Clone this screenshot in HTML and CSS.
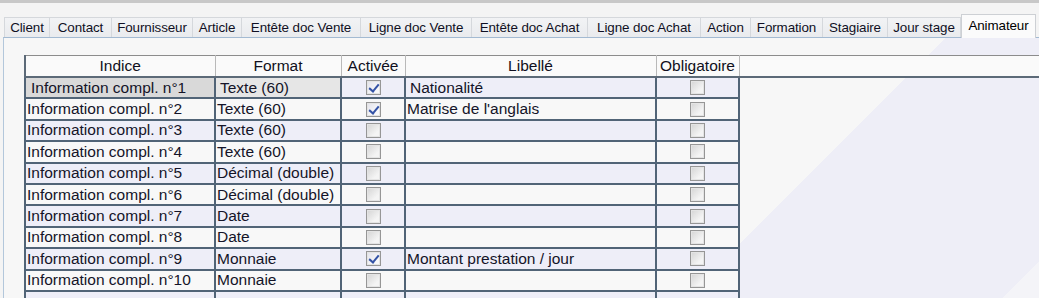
FILE: index.html
```html
<!DOCTYPE html>
<html lang="fr">
<head>
    <meta charset="UTF-8">
    <title>Paramètres - Animateur</title>
    <link rel="stylesheet" href="styles.css">
</head>
<body>
    <div class="topbar"></div>
    <div class="tabs">
        <div class="tab">Client</div>
        <div class="tab">Contact</div>
        <div class="tab">Fournisseur</div>
        <div class="tab">Article</div>
        <div class="tab">Entête doc Vente</div>
        <div class="tab">Ligne doc Vente</div>
        <div class="tab">Entête doc Achat</div>
        <div class="tab">Ligne doc Achat</div>
        <div class="tab">Action</div>
        <div class="tab">Formation</div>
        <div class="tab">Stagiaire</div>
        <div class="tab">Jour stage</div>
        <div class="tab sel">Animateur</div>
    </div>
    <div class="panel">
        <table class="grid">
            <col class="c1">
            <col class="c2">
            <col class="c3">
            <col class="c4">
            <col class="c5">
            <col>
            <tr class="head">
                <th>Indice</th>
                <th>Format</th>
                <th>Activée</th>
                <th>Libellé</th>
                <th>Obligatoire</th>
                <th class="fill"></th>
            </tr>
            <tr class="odd cur">
                <td class="ind">Information compl. n°1</td>
                <td class="fmt">Texte (60)</td>
                <td class="ck"><span class="box on"></span></td>
                <td class="lib">Nationalité</td>
                <td class="ck"><span class="box"></span></td>
                <td class="fill"></td>
            </tr>
            <tr>
                <td>Information compl. n°2</td>
                <td>Texte (60)</td>
                <td class="ck"><span class="box on"></span></td>
                <td>Matrise de l'anglais</td>
                <td class="ck"><span class="box"></span></td>
                <td class="fill"></td>
            </tr>
            <tr class="odd">
                <td>Information compl. n°3</td>
                <td>Texte (60)</td>
                <td class="ck"><span class="box"></span></td>
                <td></td>
                <td class="ck"><span class="box"></span></td>
                <td class="fill"></td>
            </tr>
            <tr>
                <td>Information compl. n°4</td>
                <td>Texte (60)</td>
                <td class="ck"><span class="box"></span></td>
                <td></td>
                <td class="ck"><span class="box"></span></td>
                <td class="fill"></td>
            </tr>
            <tr class="odd">
                <td>Information compl. n°5</td>
                <td>Décimal (double)</td>
                <td class="ck"><span class="box"></span></td>
                <td></td>
                <td class="ck"><span class="box"></span></td>
                <td class="fill"></td>
            </tr>
            <tr>
                <td>Information compl. n°6</td>
                <td>Décimal (double)</td>
                <td class="ck"><span class="box"></span></td>
                <td></td>
                <td class="ck"><span class="box"></span></td>
                <td class="fill"></td>
            </tr>
            <tr class="odd">
                <td>Information compl. n°7</td>
                <td>Date</td>
                <td class="ck"><span class="box"></span></td>
                <td></td>
                <td class="ck"><span class="box"></span></td>
                <td class="fill"></td>
            </tr>
            <tr>
                <td>Information compl. n°8</td>
                <td>Date</td>
                <td class="ck"><span class="box"></span></td>
                <td></td>
                <td class="ck"><span class="box"></span></td>
                <td class="fill"></td>
            </tr>
            <tr class="odd">
                <td>Information compl. n°9</td>
                <td>Monnaie</td>
                <td class="ck"><span class="box on"></span></td>
                <td>Montant prestation / jour</td>
                <td class="ck"><span class="box"></span></td>
                <td class="fill"></td>
            </tr>
            <tr>
                <td>Information compl. n°10</td>
                <td>Monnaie</td>
                <td class="ck"><span class="box"></span></td>
                <td></td>
                <td class="ck"><span class="box"></span></td>
                <td class="fill"></td>
            </tr>
            <tr class="odd">
                <td></td>
                <td></td>
                <td></td>
                <td></td>
                <td></td>
                <td class="fill"></td>
            </tr>
        </table>
    </div>
</body>
</html>
```

FILE: styles.css
```css
html, body {
    margin: 0;
    height: 100%;
    overflow: hidden;
}
body {
    background: #f4f4f4;
    font-family: "Liberation Sans", Arial, sans-serif;
    color: #141428;
}
.topbar {
    height: 3px;
    background: #c8c8c8;
}

/* tab strip */
.tabs {
    display: flex;
    align-items: flex-end;
    height: 34px;
    padding-left: 4px;
    box-sizing: border-box;
}
.tab {
    height: 20px;
    box-sizing: border-box;
    font-size: 13.4px;
    line-height: 19px;
    text-align: center;
    white-space: nowrap;
    letter-spacing: -0.1px;
    background: linear-gradient(#f2f3f5, #e9ebee);
    border: 1px solid #d5d8dc;
    border-bottom: 0;
    border-left: 0;
    color: #101024;
}
.tab:first-child {
    border-left: 1px solid #d5d8dc;
}
.tab:nth-child(1) { width: 46px; }
.tab:nth-child(2) { width: 62px; }
.tab:nth-child(3) { width: 81px; }
.tab:nth-child(4) { width: 49px; }
.tab:nth-child(5) { width: 119px; }
.tab:nth-child(6) { width: 111px; }
.tab:nth-child(7) { width: 116px; }
.tab:nth-child(8) { width: 113px; }
.tab:nth-child(9) { width: 50px; }
.tab:nth-child(10) { width: 72px; }
.tab:nth-child(11) { width: 65px; }
.tab:nth-child(12) { width: 73px; }
.tab.sel {
    width: 75px;
    height: 24px;
    margin-bottom: -1px;
    line-height: 21px;
    background: #fbfbfb;
    border: 1px solid #cdd0d4;
    border-bottom: 0;
    color: #000;
    position: relative;
}

/* panel */
.panel {
    margin-left: 3px;
    height: 261px;
    border-top: 1px solid #a3bad2;
    border-left: 1px solid #b3c7db;
    padding: 17px 0 0 20px;
    box-sizing: border-box;
    background: linear-gradient(135deg, #f7f7f7 666px, #eeeef7 666px, #eeeef7 890px, #f4f4f8 890px);
}

/* grid */
.grid {
    table-layout: fixed;
    border-collapse: collapse;
    width: 1015px;
    font-size: 15.5px;
}
.c1 { width: 190px; }
.c2 { width: 126px; }
.c3 { width: 64px; }
.c4 { width: 251px; }
.c5 { width: 83px; }
.grid th {
    height: 20px;
    padding: 0;
    font-weight: normal;
    text-align: center;
    background: #fafafa;
    border-top: 1px solid #8c8c8c;
    border-bottom: 2px solid #5c6a78;
    border-left: 1px solid #b9b9b9;
    border-right: 1px solid #b9b9b9;
    color: #101020;
    white-space: nowrap;
}
.grid th:first-child {
    border-left: 2px solid #5c6a78;
}
.grid th.fill {
    border-right: 0;
}
.grid tr {
    height: 21.4px;
}
.grid td {
    padding: 0 0 0 1px;
    border: 2px solid #516477;
    background: #f8f8f8;
    white-space: nowrap;
    overflow: hidden;
    vertical-align: middle;
}
.grid tr.odd td {
    background: #eeeef8;
}
.grid td.fill,
.grid tr.odd td.fill {
    background: transparent;
    border: 0;
}
.grid tr.cur td.ind {
    background: #d9d9d9;
    padding-left: 5px;
}
.grid tr.cur td.fmt {
    background: #e6e6e6;
    padding-left: 4px;
}
.grid tr.cur td.lib {
    padding-left: 4px;
}
.grid td.ck {
    text-align: center;
    padding: 0;
    line-height: 0;
}

/* checkboxes */
.box {
    display: inline-block;
    width: 15px;
    height: 15px;
    box-sizing: border-box;
    border: 1px solid #969696;
    box-shadow: inset 0 0 0 1px #e4e4e4;
    background: linear-gradient(135deg, #d4d4d4, #f4f4f4 70%);
    vertical-align: middle;
    position: relative;
}
.box.on {
    background: linear-gradient(135deg, #e2e2ea, #f8f8fa 70%);
}
.box.on::after {
    content: "";
    position: absolute;
    left: 4px;
    top: 1px;
    width: 4px;
    height: 8px;
    border-right: 2px solid #3453a6;
    border-bottom: 2px solid #3453a6;
    transform: rotate(40deg);
}
```
